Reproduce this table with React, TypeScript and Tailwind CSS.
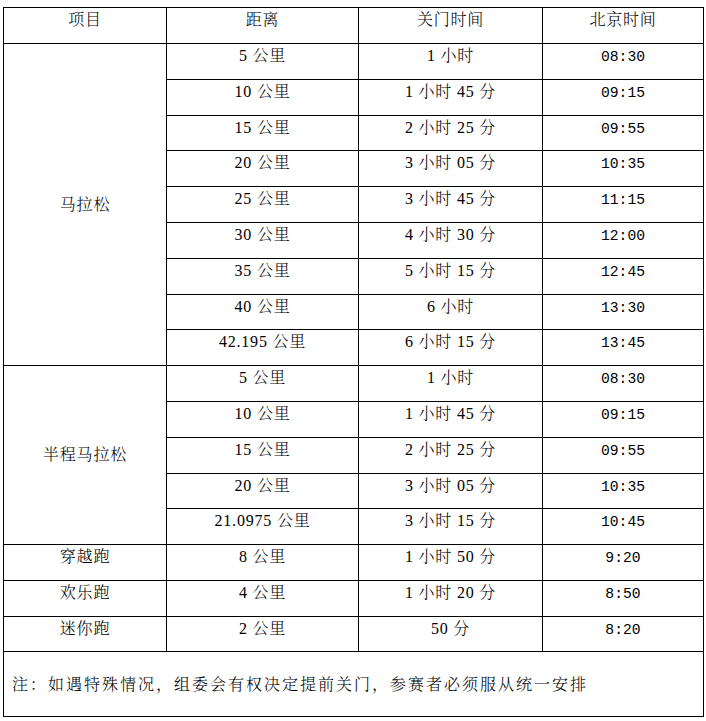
import React from "react";

type Row = { dist: string; cut: string; time: string };

const marathon: Row[] = [
  { dist: "5 公里", cut: "1 小时", time: "08:30" },
  { dist: "10 公里", cut: "1 小时 45 分", time: "09:15" },
  { dist: "15 公里", cut: "2 小时 25 分", time: "09:55" },
  { dist: "20 公里", cut: "3 小时 05 分", time: "10:35" },
  { dist: "25 公里", cut: "3 小时 45 分", time: "11:15" },
  { dist: "30 公里", cut: "4 小时 30 分", time: "12:00" },
  { dist: "35 公里", cut: "5 小时 15 分", time: "12:45" },
  { dist: "40 公里", cut: "6 小时", time: "13:30" },
  { dist: "42.195 公里", cut: "6 小时 15 分", time: "13:45" },
];

const half: Row[] = [
  { dist: "5 公里", cut: "1 小时", time: "08:30" },
  { dist: "10 公里", cut: "1 小时 45 分", time: "09:15" },
  { dist: "15 公里", cut: "2 小时 25 分", time: "09:55" },
  { dist: "20 公里", cut: "3 小时 05 分", time: "10:35" },
  { dist: "21.0975 公里", cut: "3 小时 15 分", time: "10:45" },
];

const others = [
  { name: "穿越跑", dist: "8 公里", cut: "1 小时 50 分", time: "9:20" },
  { name: "欢乐跑", dist: "4 公里", cut: "1 小时 20 分", time: "8:50" },
  { name: "迷你跑", dist: "2 公里", cut: "50 分", time: "8:20" },
];

const cell = "border border-black text-center align-top pt-[2px] leading-[20px]";
const mono = "font-['Liberation_Mono','Noto_Sans_CJK_SC',monospace] text-[14.7px] tracking-normal";

const App: React.FC = () => {
  return (
    <div className="min-h-screen bg-white text-black font-['Liberation_Serif','Noto_Serif_CJK_SC','Noto_Sans_CJK_SC',serif] text-[16px] font-light tracking-[0.8px]">
      <div className="pl-[3px] pt-[7px]">
        <table className="table-fixed border-collapse w-[700px]">
          <colgroup>
            <col className="w-[163px]" />
            <col className="w-[192px]" />
            <col className="w-[184px]" />
            <col className="w-[161px]" />
          </colgroup>
          <tbody>
            {/* Header */}
            <tr className="h-[36px]">
              <td className={cell}>项目</td>
              <td className={cell}>距离</td>
              <td className={cell}>关门时间</td>
              <td className={cell}>北京时间</td>
            </tr>

            {/* 马拉松 */}
            {marathon.map((r, i) => (
              <tr key={"m" + i} className="h-[35.8px]">
                {i === 0 && (
                  <td rowSpan={marathon.length} className="border border-black text-center align-middle">
                    马拉松
                  </td>
                )}
                <td className={cell}>{r.dist}</td>
                <td className={cell}>{r.cut}</td>
                <td className={cell}>
                  <span className={mono}>{r.time}</span>
                </td>
              </tr>
            ))}

            {/* 半程马拉松 */}
            {half.map((r, i) => (
              <tr key={"h" + i} className="h-[35.8px]">
                {i === 0 && (
                  <td rowSpan={half.length} className="border border-black text-center align-middle">
                    半程马拉松
                  </td>
                )}
                <td className={cell}>{r.dist}</td>
                <td className={cell}>{r.cut}</td>
                <td className={cell}>
                  <span className={mono}>{r.time}</span>
                </td>
              </tr>
            ))}

            {/* 其他项目 */}
            {others.map((r) => (
              <tr key={r.name} className="h-[35.7px]">
                <td className={cell}>{r.name}</td>
                <td className={cell}>{r.dist}</td>
                <td className={cell}>{r.cut}</td>
                <td className={cell}>
                  <span className={mono}>{r.time}</span>
                </td>
              </tr>
            ))}

            {/* 备注 */}
            <tr className="h-[65px]">
              <td colSpan={4} className="border border-black align-middle pl-[8px] pt-[2px] tracking-[2px]">
                注：如遇特殊情况，组委会有权决定提前关门，参赛者必须服从统一安排
              </td>
            </tr>
          </tbody>
        </table>
      </div>
    </div>
  );
};

export default App;
